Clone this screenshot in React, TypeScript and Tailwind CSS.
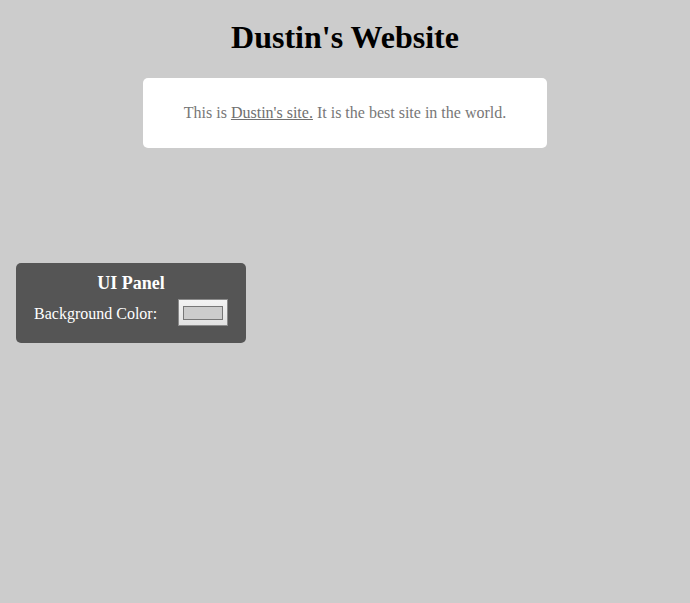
import React from "react";

export default function App() {
  return (
    <div
      className="min-h-screen w-full bg-[#cccccc] flex flex-col"
      style={{ fontFamily: '"Liberation Serif", "Times New Roman", serif' }}
    >
      <h1 className="mt-[19px] text-center text-[32px] leading-[37px] font-bold text-black">
        Dustin's Website
      </h1>
      <div className="mt-[22px] self-center w-[404px] h-[70px] bg-white rounded-[5px] flex items-center justify-center">
        <p className="text-[16px] leading-[18px] text-[#777777]">
          This is <a href="#" className="underline text-[#707070]">Dustin's site.</a> It is the best site in the world.
        </p>
      </div>
      <div className="mt-[115px] ml-4 w-[230px] h-[80px] bg-[#555555] rounded-[5px] pt-[10px] px-[18px] flex flex-col">
        <div className="text-center text-white font-bold text-[18px] leading-[21px]">UI Panel</div>
        <div className="mt-[5px] flex items-end justify-between">
          <span className="text-white text-[16px] leading-[18px] pb-[3px]">Background Color:</span>
          <div className="w-[50px] h-[27px] border border-[#8a8a8a] bg-gradient-to-b from-[#f3f3f3] to-[#e2e2e2] flex items-center justify-center">
            <div className="w-[40px] h-[14px] border border-[#777777] bg-[#cccccc]" />
          </div>
        </div>
      </div>
    </div>
  );
}
